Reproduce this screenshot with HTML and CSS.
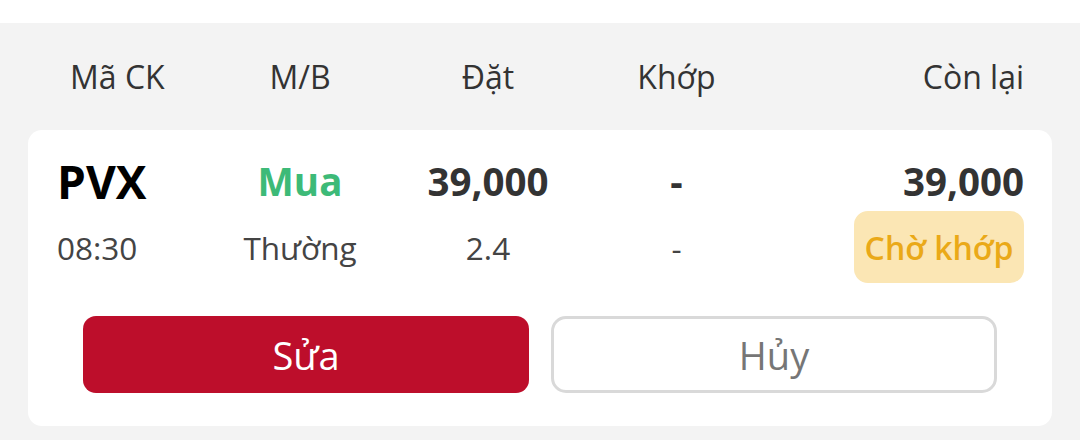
FILE: index.html
```html
<!DOCTYPE html>
<html lang="vi">
<head>
<meta charset="utf-8">
<link rel="stylesheet" href="styles.css">
</head>
<body>
<div class="top"></div>
<div class="panel">
  <div class="grid header">
    <div class="c1 hfirst">Mã CK</div>
    <div class="cc">M/B</div>
    <div class="cc">Đặt</div>
    <div class="cc">Khớp</div>
    <div class="cr">Còn lại</div>
  </div>
  <div class="card">
    <div class="grid row1">
      <div class="c1 sym">PVX</div>
      <div class="cc buy">Mua</div>
      <div class="cc val">39,000</div>
      <div class="cc val">-</div>
      <div class="cr val">39,000</div>
    </div>
    <div class="grid row2">
      <div class="c1">08:30</div>
      <div class="cc">Thường</div>
      <div class="cc">2.4</div>
      <div class="cc">-</div>
      <div class="cr"><span class="badge">Chờ khớp</span></div>
    </div>
    <div class="actions">
      <button class="btn btn-edit">Sửa</button>
      <button class="btn btn-cancel">Hủy</button>
    </div>
  </div>
</div>
</body>
</html>
```

FILE: styles.css
```css
html, body {
  margin: 0;
  padding: 0;
  background: #ffffff;
  font-family: "Open Sans", "Noto Sans", sans-serif;
}

.top {
  height: 23px;
  background: #ffffff;
}

.panel {
  background: #f3f3f3;
  padding: 0 28px 14px;
}

.grid {
  display: grid;
  grid-template-columns: 149px 188px 188px 189px 1fr;
  align-items: center;
}

.c1 { text-align: left; white-space: nowrap; }
.cc { text-align: center; white-space: nowrap; }
.cr { text-align: right; white-space: nowrap; }

.header {
  height: 107px;
  padding: 0 28px 0 29px;
  font-size: 32px;
  color: #333333;
}

.hfirst { padding-left: 13px; }

.card {
  background: #ffffff;
  border-radius: 14px;
  padding: 20px 28px 33px 29px;
}

.row1 {
  height: 61px;
  font-weight: 700;
  font-size: 38.5px;
  color: #333333;
}

.row1 .sym {
  font-size: 46px;
  color: #000000;
}

.row1 .buy {
  color: #3dba78;
}

.row2 {
  height: 72px;
  font-size: 31.5px;
  color: #444444;
}

.badge {
  display: inline-flex;
  align-items: center;
  justify-content: center;
  width: 170px;
  height: 72px;
  border-radius: 14px;
  background: #fbe6b4;
  color: #eaa918;
  font-weight: 600;
  font-size: 32px;
  box-sizing: border-box;
}

.actions {
  display: grid;
  grid-template-columns: 1fr 1fr;
  gap: 22px;
  padding: 0 27px 0 26px;
  margin-top: 33px;
}

.btn {
  height: 77px;
  border-radius: 13px;
  font-family: "Open Sans", "Noto Sans", sans-serif;
  font-size: 38px;
  box-sizing: border-box;
  padding: 0;
  cursor: pointer;
}

.btn-edit {
  background: #bd0e2b;
  color: #ffffff;
  border: none;
}

.btn-cancel {
  background: #ffffff;
  color: #767676;
  border: 3px solid #d9d9d9;
  border-radius: 15px;
}
```
